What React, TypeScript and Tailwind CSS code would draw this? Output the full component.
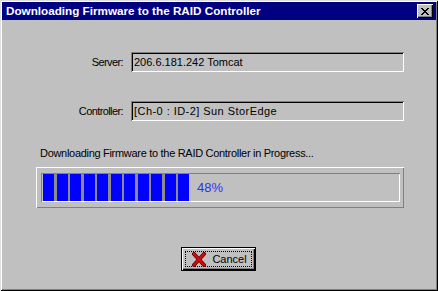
import React from "react";

const font = { fontFamily: '"Liberation Sans", Arial, sans-serif' };

function Field({ label, value, wide }: { label: string; value: string; wide?: boolean }) {
  return (
    <div className="flex items-center">
      <div className="w-[129px] pr-[8px] text-right text-[11px] leading-[13px] tracking-[-0.6px] text-black">{label}</div>
      <div
        className={
          wide
            ? "w-[273px] h-[20px] bg-[#c0c0c0] shadow-[inset_1px_1px_#808080,inset_-1px_-1px_#ffffff,inset_2px_2px_#000000,inset_-2px_-2px_#c0c0c0] flex items-center pl-[3px] text-[11px] tracking-[0.45px] text-black whitespace-nowrap"
            : "w-[273px] h-[20px] bg-[#c0c0c0] shadow-[inset_1px_1px_#808080,inset_-1px_-1px_#ffffff,inset_2px_2px_#000000,inset_-2px_-2px_#c0c0c0] flex items-center pl-[3px] text-[11px] text-black whitespace-nowrap"
        }
      >
        {value}
      </div>
    </div>
  );
}

function CancelIcon() {
  return (
    <svg width="16" height="15" viewBox="0 0 16 15" className="block">
      <path d="M3 2 L13 13" stroke="#7a0000" strokeWidth="4" strokeLinecap="round" />
      <path d="M13 2 L3 13" stroke="#7a0000" strokeWidth="4" strokeLinecap="round" />
      <path d="M3 2 L13 13" stroke="#c81010" strokeWidth="2.2" strokeLinecap="round" />
      <path d="M13 2 L3 13" stroke="#c81010" strokeWidth="2.2" strokeLinecap="round" />
    </svg>
  );
}

export default function App() {
  const blocks = Array.from({ length: 11 }, (_, i) => i);
  return (
    <div style={font} className="w-[438px] h-[291px] bg-[#c0c0c0] p-[2px] flex flex-col shadow-[inset_1px_1px_#dfdfdf,inset_-1px_-1px_#000000,inset_2px_2px_#ffffff,inset_-2px_-2px_#808080]">
      <div className="h-[18px] bg-[#000080] flex items-center justify-between pl-[4px] pr-[3px]">
        <span className="text-white font-bold text-[11.7px] leading-[14px] whitespace-nowrap">
          Downloading Firmware to the RAID Controller
        </span>
        <div className="w-[16px] h-[14px] bg-[#c0c0c0] flex items-center justify-center shadow-[inset_1px_1px_#ffffff,inset_-1px_-1px_#000000,inset_-2px_-2px_#808080]">
          <svg width="8" height="7" viewBox="0 0 8 7" className="block">
            <path d="M0 0h2v1h1v1h2v-1h1v-1h2v1h-1v1h-1v1h-1v1h1v1h1v1h1v1h-2v-1h-1v-1h-2v1h-1v1h-2v-1h1v-1h1v-1h1v-1h-1v-1h-1v-1h-1z" fill="#000" />
          </svg>
        </div>
      </div>
      <div className="flex-1 flex flex-col">
        <div className="mt-[32px]">
          <Field label="Server:" value="206.6.181.242 Tomcat" />
        </div>
        <div className="mt-[29px]">
          <Field label="Controller:" value="[Ch-0 : ID-2] Sun StorEdge" wide />
        </div>
        <div className="mt-[26px] ml-[38px] text-[11px] leading-[13px] tracking-[-0.3px] text-black whitespace-nowrap">
          Downloading Firmware to the RAID Controller in Progress...
        </div>
        <div className="mt-[7px] ml-[34px] w-[368px] h-[41px] pl-[5px] pr-[4px] pt-[6px] shadow-[inset_1px_1px_#ffffff,inset_-1px_-1px_#808080]">
          <div className="h-[29px] p-[1px] pl-[2px] flex items-center shadow-[inset_1px_1px_#808080,inset_-1px_-1px_#ffffff]">
            <div className="inline-flex h-[27px] bg-[#8c8c8c]">
              {blocks.map((i) => (
                <div
                  key={i}
                  className={
                    i === 0
                      ? "w-[11px] h-[27px] bg-[#0000ff]"
                      : i % 2 === 1
                      ? "w-[11px] h-[27px] bg-[#0000ff] ml-[3px]"
                      : "w-[11px] h-[27px] bg-[#0000ff] ml-[2px]"
                  }
                />
              ))}
            </div>
            <span className="ml-[8px] text-[13px] leading-[15px] text-[#3030f0]">48%</span>
          </div>
        </div>
        <div className="mt-[39px] flex justify-center pr-[2px]">
          <div className="w-[75px] h-[24px] bg-[#c0c0c0] border border-black p-[3px] shadow-[inset_1px_1px_#ffffff,inset_-1px_-1px_#000000,inset_-2px_-2px_#808080]">
            <div className="w-full h-full border border-dotted border-black flex items-center justify-center gap-[5px] pl-[2px]">
              <CancelIcon />
              <span className="text-[11px] leading-[13px] text-black">Cancel</span>
            </div>
          </div>
        </div>
      </div>
    </div>
  );
}
